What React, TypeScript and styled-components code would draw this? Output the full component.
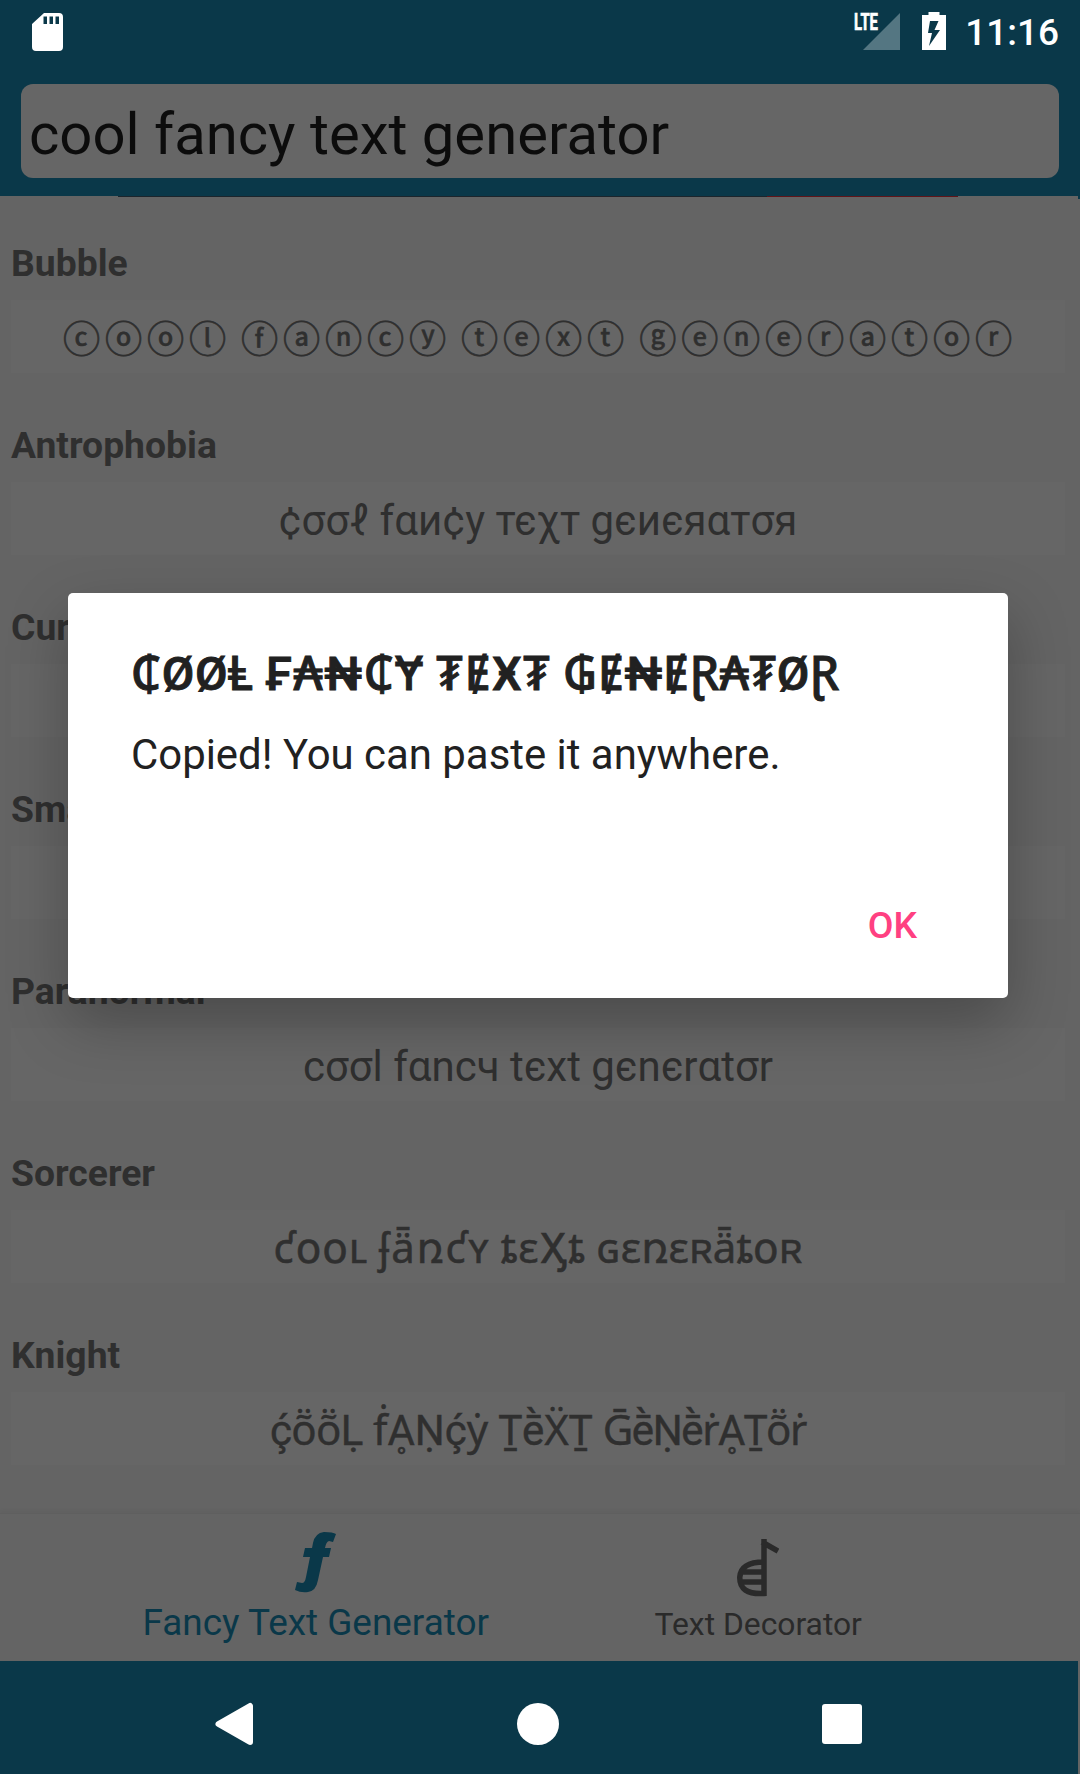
import React from "react";
import styled, { createGlobalStyle } from "styled-components";

const sans = `Roboto, "Noto Sans", "Noto Sans CJK JP", "DejaVu Sans", sans-serif`;

const Global = createGlobalStyle`
  html, body { margin: 0; background: #646464; }
  * { box-sizing: border-box; }
`;

const Screen = styled.main`
  position: relative;
  width: 1080px;
  height: 1774px;
  overflow: hidden;
  display: flex;
  flex-direction: column;
  background: #646464;
  font-family: ${sans};
`;

const Header = styled.header`
  height: 196px;
  flex: none;
  display: flex;
  flex-direction: column;
  background: #0a3849;
`;

const StatusBar = styled.div`
  height: 84px;
  padding: 0 21px 0 32px;
  display: flex;
  align-items: flex-start;
  justify-content: space-between;
`;

const StatusGroup = styled.div`
  display: flex;
  align-items: flex-start;
  padding-top: 12px;
`;

const SignalIcon = styled.svg`
  margin-right: 22px;
  overflow: visible;
`;

const BatteryIcon = styled.svg`
  margin-right: 19px;
`;

const Clock = styled.span`
  margin-top: -1px;
  font-size: 37px;
  font-weight: 500;
  line-height: 44px;
  color: #fff;
`;

const SearchField = styled.div`
  height: 94px;
  margin: 0 21px;
  padding-left: 8px;
  border-radius: 12px;
  background: #666;
  color: #0c0c0c;
  font-size: 58px;
  line-height: 100px;
  white-space: pre;
`;

const AdStrip = styled.div`
  display: flex;
  justify-content: space-between;
  height: 1px;
  padding-left: 118px;

  &::before {
    content: "";
    width: 840px;
    background: linear-gradient(to right, #1c252c 0 649px, #601418 649px);
  }

  &::after {
    content: "";
    width: 2px;
    height: 3px;
    background: #0a3849;
  }
`;

const List = styled.section`
  flex: 1;
  display: flex;
  flex-direction: column;
  padding-top: 42px;
  overflow: hidden;
`;

const Item = styled.article`
  height: 182px;
  flex: none;
  padding: 0 15px 0 11px;
`;

const ItemTitle = styled.h2`
  margin: 0;
  height: 61px;
  font-size: 37.3px;
  font-weight: 700;
  line-height: 48.5px;
  color: #2f2f2f;
`;

const ItemText = styled.div`
  height: 73px;
  background: #666;
  color: #2f2f2f;
  font-size: 42px;
  line-height: 78px;
  text-align: center;
  white-space: pre;
`;

const Word = styled.span<{ $spacing: number; $stroke: number }>`
  letter-spacing: ${(p) => p.$spacing}px;
  -webkit-text-stroke: ${(p) => p.$stroke}px currentColor;
`;

const Circled = styled.span`
  padding-left: 4px;
  font-size: 37.2px;
  line-height: 70px;
  letter-spacing: 4.8px;
  word-spacing: -3.9px;
  -webkit-text-stroke: 0.7px currentColor;
`;

const TabBar = styled.nav`
  height: 148px;
  flex: none;
  display: flex;
  border-top: 1px solid #5f5f5f;
  box-shadow: 0 -3px 3px rgba(0, 0, 0, 0.03);
  padding: 0 102px 0 93px;
`;

const Tab = styled.div<{ $active?: boolean }>`
  width: ${(p) => (p.$active ? 446 : 440)}px;
  display: flex;
  flex-direction: column;
  align-items: center;
  padding-top: ${(p) => (p.$active ? 17 : 24)}px;
  color: ${(p) => (p.$active ? "#0a3849" : "#2a2a2a")};
  font-size: ${(p) => (p.$active ? 36.9 : 31.8)}px;
  line-height: 40px;
  white-space: nowrap;
`;

const TabLabel = styled.span<{ $gap: number }>`
  margin-top: ${(p) => p.$gap}px;
`;

const NavBar = styled.footer`
  width: 1078px;
  height: 113px;
  flex: none;
  display: flex;
  align-items: center;
  padding: 13px 0 0 215px;
  background: #0a3849;
`;

const Dialog = styled.div`
  position: absolute;
  left: 68px;
  top: 593px;
  width: 940px;
  height: 405px;
  padding: 53px 63px;
  display: flex;
  flex-direction: column;
  border-radius: 5px;
  background: #fff;
  color: #212121;
  box-shadow: 0 24px 60px rgba(0, 0, 0, 0.26);
`;

const DialogTitle = styled.h1`
  margin: 0;
  font-size: 47px;
  font-weight: 500;
  line-height: 56px;
  white-space: pre;
`;

const DialogMessage = styled.p`
  margin: 28px 0 0;
  font-size: 41.9px;
  line-height: 50px;
  white-space: pre;
`;

const OkButton = styled.button`
  margin: 123px 28px 0 auto;
  padding: 0;
  border: 0;
  background: none;
  font: 500 37.3px/44px ${sans};
  color: #ff4081;
`;

type Phrase = { words: string[]; spacing?: number[]; stroke?: number };
type Style = Phrase & { title: string; circled?: boolean };

const styles: Style[] = [
  { title: "Bubble", words: ["ⓒⓞⓞⓛ", "ⓕⓐⓝⓒⓨ", "ⓣⓔⓧⓣ", "ⓖⓔⓝⓔⓡⓐⓣⓞⓡ"], circled: true },
  { title: "Antrophobia", words: ["¢σσℓ", "fαи¢у", "тєχт", "gєиєяαтσя"] },
  { title: "Currency", words: [] },
  { title: "Small Caps", words: [] },
  { title: "Paranormal", words: ["cσσl", "fαncч", "tєxt", "gєnєrαtσr"] },
  { title: "Sorcerer", words: ["ƈօօʟ", "ʄǟռƈʏ", "ȶɛӼȶ", "ɢɛռɛʀǟȶօʀ"], spacing: [1, 1.8, 1.3, 0.2], stroke: 0.5 },
  { title: "Knight", words: ["ḉṏṏḶ", "ḟḀṆḉẏ", "ṮḕẌṮ", "ḠḕṆḕṙḀṮṏṙ"], spacing: [-0.7, 0, 0, -1.4], stroke: 0.4 },
];

const copied: Phrase = {
  words: ["₵ØØⱠ", "₣₳₦₵Ɏ", "₮ɆӾ₮", "₲Ɇ₦ɆⱤ₳₮ØⱤ"],
  spacing: [0.9, 1.7, 1.4, 0.5],
  stroke: 0.9,
};

function Spaced({ words, spacing = [], stroke = 0 }: Phrase) {
  return (
    <>
      {words.map((word, i) => (
        <React.Fragment key={i}>
          {i > 0 && " "}
          <Word $spacing={spacing[i] ?? 0} $stroke={stroke}>{word}</Word>
        </React.Fragment>
      ))}
    </>
  );
}

function StyledSample({ sample }: { sample: Style }) {
  if (sample.circled) return <Circled>{sample.words.join(" ")}</Circled>;
  if (!sample.spacing) return <>{sample.words.join(" ")}</>;
  return <Spaced words={sample.words} spacing={sample.spacing} stroke={sample.stroke} />;
}

export default function App() {
  return (
    <Screen>
      <Global />
      <Header>
        <StatusBar>
          <StatusGroup>
            <svg width="31" height="39" viewBox="0 0 31 39">
              <path fillRule="evenodd" fill="#fff" d="M12 1H27Q31 1 31 5V35Q31 39 27 39H4Q0 39 0 35V12ZM11.5 4.500V12H15V4.500ZM17.500 4.500V12H21V4.500ZM23.500 4.500V12H27V4.500Z" />
            </svg>
          </StatusGroup>
          <StatusGroup>
            <SignalIcon width="46" height="39" viewBox="0 0 46 39">
              <path d="M9 38L46 1V38Z" fill="#547682" />
              <text x="0" y="18" fill="#fff" stroke="#fff" strokeWidth="0.7" fontSize="23" fontWeight="700" textLength="24" lengthAdjust="spacingAndGlyphs" fontFamily="Roboto">LTE</text>
            </SignalIcon>
            <BatteryIcon width="24" height="39" viewBox="0 0 24 39">
              <path fillRule="evenodd" fill="#fff" d="M6.500 0H17.500V3H24V38H0V3H6.500ZM8 9L6 21H10L7 34L18 18H12.500L16.500 9Z" />
            </BatteryIcon>
            <Clock>11:16</Clock>
          </StatusGroup>
        </StatusBar>
        <SearchField>cool fancy text generator</SearchField>
      </Header>
      <AdStrip />
      <List>
        {styles.map((sample) => (
          <Item key={sample.title}>
            <ItemTitle>{sample.title}</ItemTitle>
            <ItemText>
              <StyledSample sample={sample} />
            </ItemText>
          </Item>
        ))}
      </List>
      <TabBar>
        <Tab $active>
          <svg width="42" height="62" viewBox="0 0 42 62">
            <path fill="#0a3849" d="M41 3Q38 1 29 1Q20 2 18 12L17 17H10L8 26H15L11 46Q10 52 7 52L2 51L0 59Q6 62 13 61Q21 60 23 49L28 26H34L36 17H30Q31 11 34 10L38 11Z" />
          </svg>
          <TabLabel $gap={10}>Fancy Text Generator</TabLabel>
        </Tab>
        <Tab>
          <svg width="42" height="60" viewBox="0 0 42 60">
            <path fill="none" stroke="#2a2a2a" strokeWidth="5.500" d="M27 1V55.500Q2 57 2.800 39Q4 24 27 24M4 34H27M4 44H27M25 4L41 13" />
          </svg>
          <TabLabel $gap={6}>Text Decorator</TabLabel>
        </Tab>
      </TabBar>
      <NavBar>
        <svg width="650" height="44" viewBox="0 0 650 44">
          <path fill="#fff" stroke="#fff" strokeWidth="6" strokeLinejoin="round" d="M3.500 22L35 4V40Z" />
          <circle cx="323" cy="22" r="21" fill="#fff" />
          <rect x="607" y="2" width="40" height="40" rx="3" fill="#fff" />
        </svg>
      </NavBar>
      <Dialog>
        <DialogTitle>
          <Spaced {...copied} />
        </DialogTitle>
        <DialogMessage>Copied! You can paste it anywhere.</DialogMessage>
        <OkButton>OK</OkButton>
      </Dialog>
    </Screen>
  );
}
